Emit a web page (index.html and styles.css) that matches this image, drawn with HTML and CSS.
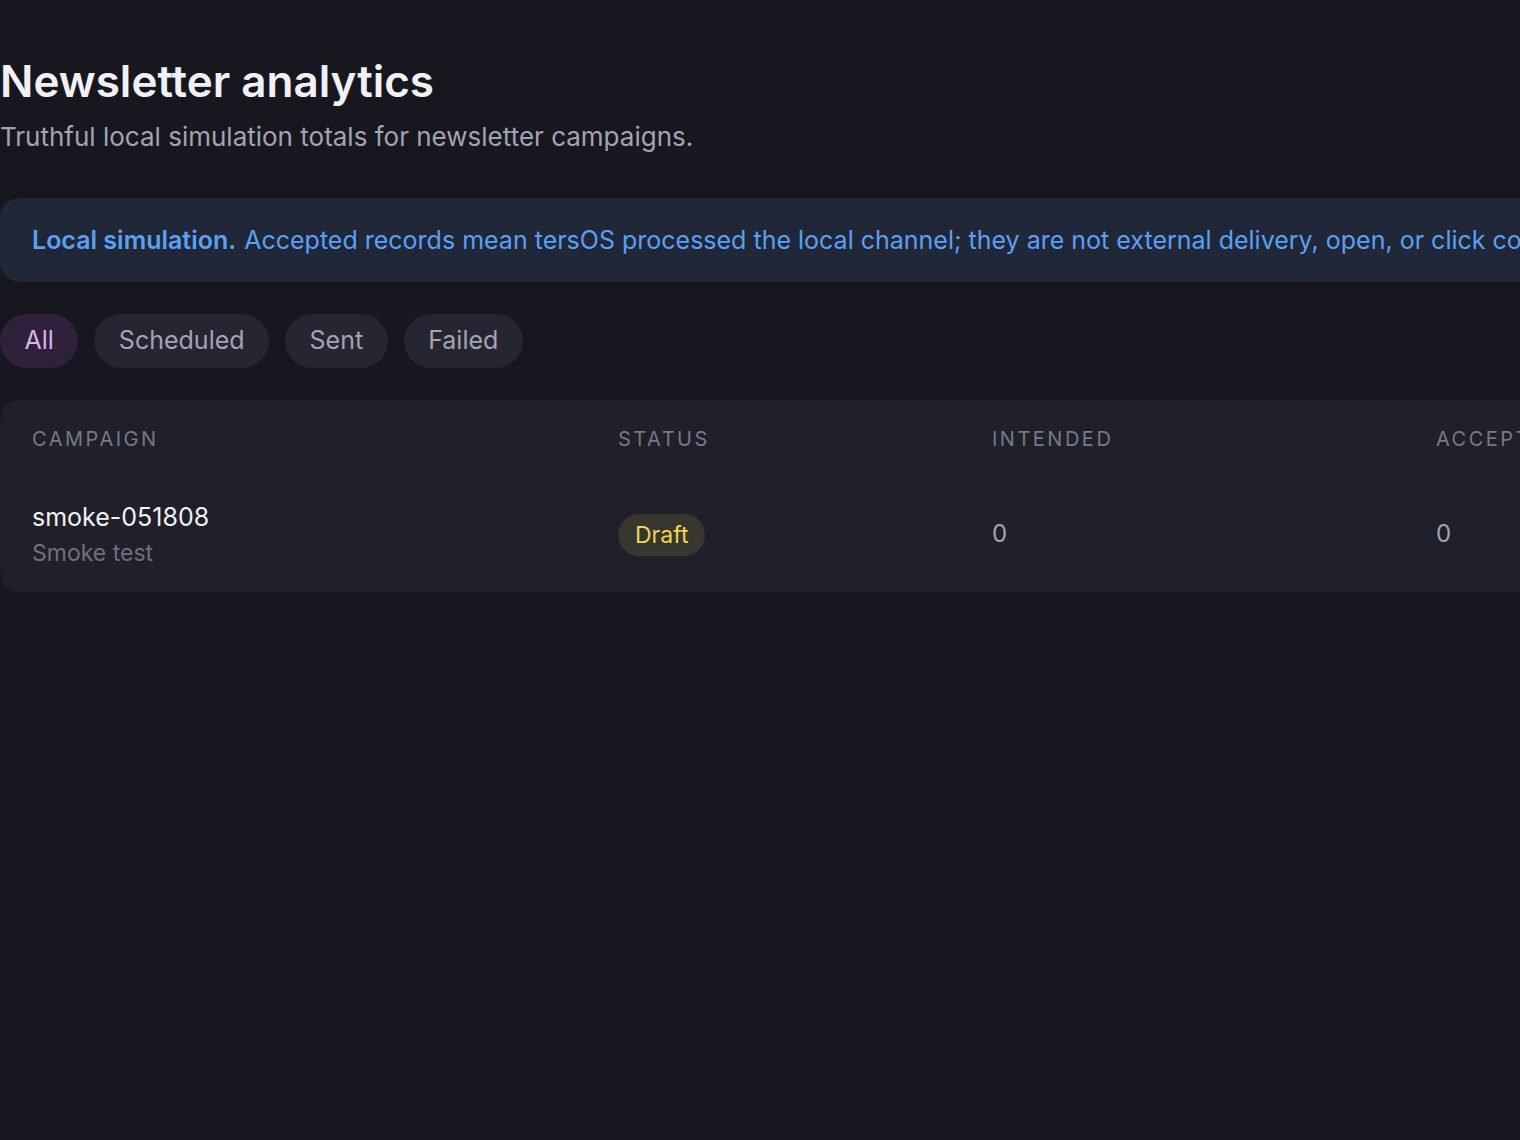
FILE: index.html
```html
<!DOCTYPE html>
<html lang="en">
<head>
<meta charset="utf-8">
<title>Newsletter analytics</title>
<link rel="stylesheet" href="styles.css">
</head>
<body>
<main class="page">
  <header class="page-head">
    <h1 class="title">Newsletter analytics</h1>
    <p class="subtitle">Truthful local simulation totals for newsletter campaigns.</p>
  </header>
  <div class="notice"><strong>Local simulation.</strong> Accepted records mean tersOS processed the local channel; they are not external delivery, open, or click confirmations.</div>
  <nav class="filters">
    <button class="pill active">All</button>
    <button class="pill">Scheduled</button>
    <button class="pill">Sent</button>
    <button class="pill">Failed</button>
  </nav>
  <section class="card">
    <div class="row head">
      <div class="cell">Campaign</div>
      <div class="cell">Status</div>
      <div class="cell">Intended</div>
      <div class="cell">Accepted</div>
      <div class="cell">Failed</div>
    </div>
    <div class="row body">
      <div class="cell campaign">
        <div class="name">smoke-051808</div>
        <div class="desc">Smoke test</div>
      </div>
      <div class="cell"><span class="badge">Draft</span></div>
      <div class="cell num">0</div>
      <div class="cell num">0</div>
      <div class="cell num">0</div>
    </div>
  </section>
</main>
</body>
</html>
```
FILE: styles.css
```css
html, body {
  margin: 0;
  padding: 0;
  background: #171720;
  overflow: hidden;
  height: 100%;
}
body {
  font-family: Inter, "Noto Sans", sans-serif;
  color: #ececf1;
}
.page {
  width: 2000px;
  padding-top: 56px;
}
.page-head {
  margin-bottom: 44px;
}
.title {
  margin: 0;
  font-size: 44px;
  font-weight: 600;
  line-height: 50px;
  color: #f1f1f5;
  letter-spacing: 0;
}
.subtitle {
  margin: 14px 0 0;
  font-size: 26px;
  line-height: 34px;
  color: #a3a3b2;
}
.notice {
  background: #1f2738;
  border-radius: 20px;
  padding: 0 32px;
  height: 84px;
  display: flex;
  align-items: center;
  font-size: 25px;
  color: #5ba0f2;
  white-space: nowrap;
  gap: 8px;
}
.notice strong {
  font-weight: 600;
}
.filters {
  display: flex;
  gap: 16px;
  margin-top: 32px;
}
.pill {
  font-family: inherit;
  font-size: 25px;
  height: 54px;
  padding: 0 24.5px 2px;
  border: none;
  border-radius: 27px;
  background: #252631;
  color: #a4a4b3;
  cursor: pointer;
}
.pill.active {
  background: #30213a;
  color: #d9b3e3;
}
.card {
  margin-top: 32px;
  background: #1f2029;
  border-radius: 20px;
  padding: 0 32px;
}
.row {
  display: grid;
  grid-template-columns: 586px 374px 444px 444px 300px;
  align-items: center;
}
.row.head {
  height: 78px;
  font-size: 20px;
  letter-spacing: 2.5px;
  text-transform: uppercase;
  color: #787887;
}
.row.body {
  height: 114px;
}
.name {
  font-size: 25px;
  line-height: 36px;
  color: #f1f1f5;
}
.desc {
  font-size: 23px;
  line-height: 36px;
  color: #6f6f7e;
}
.num {
  font-size: 24px;
  color: #a4a4b3;
  padding-bottom: 3px;
}
.badge {
  display: inline-flex;
  align-items: center;
  height: 42px;
  padding: 0 17px;
  border-radius: 21px;
  background: #38372f;
  color: #f2d552;
  font-size: 23px;
}
```
